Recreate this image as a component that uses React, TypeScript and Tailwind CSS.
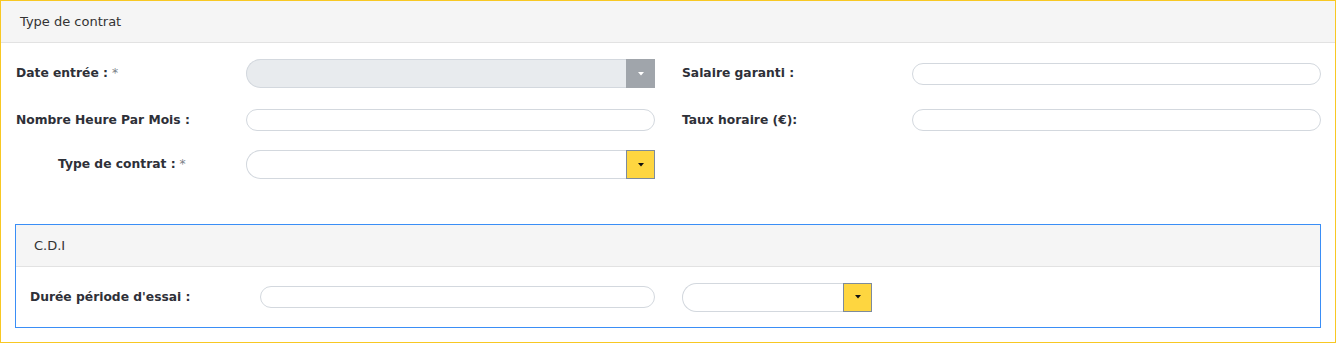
import React from "react";

const font = "font-['DejaVu_Sans',Verdana,sans-serif]";

const Caret = ({ color }: { color: string }) => (
  <svg width="6" height="4" viewBox="0 0 6 4">
    <path d="M0 0 H6 L3 3.5 Z" fill={color} />
  </svg>
);

const TextInput = ({ className = "" }: { className?: string }) => (
  <div className={`h-[22px] rounded-full border border-[#d3d8de] bg-white ${className}`} />
);

const Select = ({
  className = "",
  disabled = false,
}: {
  className?: string;
  disabled?: boolean;
}) => (
  <div className={`flex h-[29px] ${className}`}>
    <div
      className={`flex-1 rounded-l-full border border-r-0 border-[#d3d8de] ${
        disabled ? "bg-[#e8ebee]" : "bg-white"
      }`}
    />
    <div
      className={`flex w-[29px] items-center justify-center border ${
        disabled ? "border-[#a0a5ab] bg-[#a0a5ab]" : "border-[#7d8b9c] bg-[#fed640]"
      }`}
    >
      <Caret color={disabled ? "#ffffff" : "#111111"} />
    </div>
  </div>
);

const Label = ({
  text,
  required = false,
  className = "",
}: {
  text: string;
  required?: boolean;
  className?: string;
}) => (
  <div className={`text-[12.3px] font-bold text-[#2e3038] ${className}`}>
    {text}
    {required && <span className="ml-1 font-normal text-[#7b7f88]">*</span>}
  </div>
);

export default function App() {
  return (
    <div className={`w-[1338px] bg-white ${font}`}>
      <div className="w-[1336px] border border-[#f8c823] bg-white">
        <div className="flex h-[42px] items-center border-b border-[#e2e2e2] bg-[#f5f5f5] pl-[19px] text-[13px] text-[#333]">
          Type de contrat
        </div>

        <div className="px-[14px] pt-[16px] pb-[14px]">
          {/* row 1 */}
          <div className="flex h-[29px] items-center">
            <Label text="Date entrée :" required className="w-[231px] pl-px" />
            <Select disabled className="w-[409px]" />
            <div className="w-[27px]" />
            <Label text="Salaire garanti :" className="w-[230px]" />
            <TextInput className="w-[409px]" />
          </div>

          {/* row 2 */}
          <div className="mt-[18px] flex h-[28px] items-center">
            <Label text="Nombre Heure Par Mois :" className="w-[231px] pl-px" />
            <TextInput className="w-[409px]" />
            <div className="w-[27px]" />
            <Label text="Taux horaire (€):" className="w-[230px]" />
            <TextInput className="w-[409px]" />
          </div>

          {/* row 3 */}
          <div className="mt-[16px] flex h-[29px] items-center">
            <Label text="Type de contrat :" required className="w-[231px] pl-[43px]" />
            <Select className="w-[409px]" />
          </div>

          {/* C.D.I */}
          <div className="mt-[45px] border border-[#3a8ef6]">
            <div className="flex h-[42px] items-center border-b border-[#e2e2e2] bg-[#f5f5f5] pl-[18px] text-[13px] text-[#333]">
              C.D.I
            </div>
            <div className="flex h-[60px] items-center pl-[14px]">
              <Label text="Durée période d'essai :" className="w-[230px]" />
              <TextInput className="w-[395px]" />
              <div className="w-[27px]" />
              <Select className="w-[190px]" />
            </div>
          </div>
        </div>
      </div>
    </div>
  );
}
